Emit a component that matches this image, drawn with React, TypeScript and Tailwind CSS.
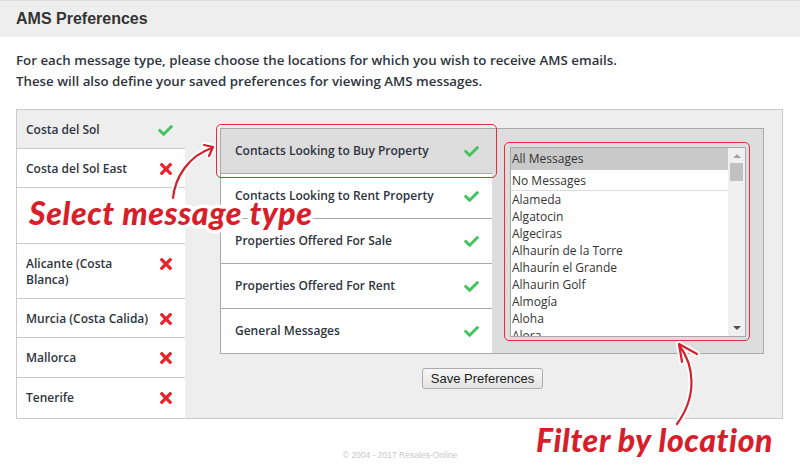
import React from 'react';

// AMS preferences screen with two help annotations on top

type Region = { name: string; on: boolean; h: string; selected?: boolean; last?: boolean };

const regions: Region[] = [
  { name: 'Costa del Sol', on: true, h: 'h-[39px]', selected: true },
  { name: 'Costa del Sol East', on: false, h: 'h-[39px]' },
  { name: '', on: false, h: 'h-[56px]' },
  { name: 'Alicante (Costa Blanca)', on: false, h: 'h-[55px]' },
  { name: 'Murcia (Costa Calida)', on: false, h: 'h-[39px]' },
  { name: 'Mallorca', on: false, h: 'h-[40px]' },
  { name: 'Tenerife', on: false, h: 'h-[40px]', last: true },
];

const messageTypes = [
  'Contacts Looking to Buy Property',
  'Contacts Looking to Rent Property',
  'Properties Offered For Sale',
  'Properties Offered For Rent',
  'General Messages',
];

const locations = [
  'Alameda',
  'Algatocin',
  'Algeciras',
  'Alhaurín de la Torre',
  'Alhaurín el Grande',
  'Alhaurin Golf',
  'Almogía',
  'Aloha',
  'Alora',
  'Arriate',
];

const Check = () => (
  <svg viewBox="0 0 512 512" className="w-[15px] h-[15px] fill-[#3fc45f]">
    <path d="M173.898 439.404l-166.4-166.4c-9.997-9.997-9.997-26.206 0-36.204l36.203-36.204c9.997-9.998 26.207-9.998 36.204 0L192 312.69 432.095 72.596c9.997-9.997 26.207-9.997 36.204 0l36.203 36.204c9.997 9.997 9.997 26.206 0 36.204l-294.4 294.401c-9.998 9.997-26.207 9.997-36.204-.001z" />
  </svg>
);

const Cross = () => (
  <svg viewBox="0 80 352 352" className="w-[12px] h-[12px] fill-[#e8212b]">
    <path d="M242.72 256l100.07-100.07c12.28-12.28 12.28-32.19 0-44.48l-22.24-22.24c-12.28-12.28-32.19-12.28-44.48 0L176 189.28 75.93 89.21c-12.28-12.28-32.19-12.28-44.48 0L9.21 111.45c-12.28 12.28-12.28 32.19 0 44.48L109.28 256 9.21 356.07c-12.28 12.28-12.28 32.19 0 44.48l22.24 22.24c12.28 12.28 32.2 12.28 44.48 0L176 322.72l100.07 100.07c12.28 12.28 32.2 12.28 44.48 0l22.24-22.24c12.28-12.28 12.28-32.19 0-44.48L242.72 256z" />
  </svg>
);

const RegionRow: React.FC<{ region: Region }> = ({ region }) => (
  <div
    className={`flex items-start justify-between pl-[9px] pr-[12px] pt-[12px] ${region.h} ${
      region.selected ? 'bg-[#eeeeee]' : 'bg-white'
    } ${region.last ? '' : 'border-b border-[#cccccc]'}`}
  >
    <span className="w-[130px] text-[12px] leading-[16px] font-semibold">{region.name}</span>
    {region.name && (
      <span className="flex h-[16px] w-[15px] items-center justify-center">
        {region.on ? <Check /> : <Cross />}
      </span>
    )}
  </div>
);

export default function App() {
  return (
    <div className="relative w-[800px] h-[469px] overflow-hidden bg-white text-[#2e3440] font-['Open_Sans',sans-serif]">
      {/* Title bar */}
      <div className="flex h-[37px] items-center border-t border-[#dcdcdc] bg-[#eeeeee] px-4">
        <h1 className="font-['Liberation_Sans',Arial,sans-serif] text-[16px] font-bold text-[#333333]">
          AMS Preferences
        </h1>
      </div>

      {/* Intro */}
      <div className="px-4 pt-[13px] text-[13.3px] leading-[21px] font-semibold">
        <p>For each message type, please choose the locations for which you wish to receive AMS emails.</p>
        <p>These will also define your saved preferences for viewing AMS messages.</p>
      </div>

      {/* Main panel */}
      <div className="mx-4 mt-[17px] flex h-[310px] w-[767px] border border-[#cccccc] bg-[#eeeeee]">
        <div className="w-[168px]">
          {regions.map((r, i) => (
            <RegionRow key={i} region={r} />
          ))}
        </div>

        <div className="flex-1 pt-[18px]">
          <div className="ml-[35px] flex h-[226px] w-[544px] border border-[#aaaaaa] bg-[#dddddd]">
            <div className="w-[271px]">
              {messageTypes.map((m, i) => (
                <div
                  key={m}
                  className={`flex items-center justify-between pl-[14px] pr-[13px] ${
                    i === messageTypes.length - 1 ? 'h-[44px]' : 'h-[45px] border-b border-[#aaaaaa]'
                  } ${i === 0 ? 'bg-[#dddddd]' : 'bg-white'}`}
                >
                  <span className="text-[12px] font-semibold">{m}</span>
                  <Check />
                </div>
              ))}
            </div>

            {/* Location list box */}
            <div className="ml-[18px] mt-[18px] flex h-[190px] w-[236px] overflow-hidden border border-[#aaaaaa] bg-white text-[12px] text-[#333333]">
              <div className="flex-1 overflow-hidden">
                <div className="h-[22px] bg-[#c9c9c9] pl-[1px] leading-[22px]">All Messages</div>
                <div className="h-[21px] border-b border-[#dddddd] pl-[1px] leading-[21px]">No Messages</div>
                {locations.map((l) => (
                  <div key={l} className="h-[17px] pl-[1px] leading-[17px]">
                    {l}
                  </div>
                ))}
              </div>
              <div className="relative w-[17px] bg-[#f0f0f0]">
                <div className="absolute left-[5px] top-[6px] h-0 w-0 border-x-[4px] border-b-[4px] border-x-transparent border-b-[#a3a3a3]" />
                <div className="absolute left-[2px] top-[15px] h-[18px] w-[13px] bg-[#c1c1c1]" />
                <div className="absolute bottom-[6px] left-[5px] h-0 w-0 border-x-[4px] border-t-[4px] border-x-transparent border-t-[#505050]" />
              </div>
            </div>
          </div>

          <div className="mt-[14px] flex justify-center pr-[2px]">
            <button className="h-[21px] w-[121px] rounded-[3px] border border-[#adadad] bg-gradient-to-b from-[#f7f7f7] to-[#e3e3e3] font-['Liberation_Sans',Arial,sans-serif] text-[13px] leading-[19px] text-[#222222]">
              Save Preferences
            </button>
          </div>
        </div>
      </div>

      {/* Footer */}
      <div className="mt-[30px] text-center font-['Liberation_Sans',Arial,sans-serif] text-[8.5px] leading-[12px] text-[#c8c8c8]">
        © 2004 - 2017 Resales-Online
      </div>

      {/* Annotation: highlight boxes */}
      <div className="pointer-events-none absolute left-[216px] top-[124px] h-[54px] w-[281px] rounded-[5px] border border-[#e0303c]" />
      <div className="pointer-events-none absolute left-[504px] top-[142px] h-[199px] w-[246px] rounded-[5px] border border-[#e0303c]" />

      {/* Annotation: arrows */}
      <svg className="pointer-events-none absolute left-0 top-0 h-[469px] w-[800px]" viewBox="0 0 800 469" fill="none">
        <g stroke="#ffffff" strokeWidth="6" strokeLinecap="round" strokeLinejoin="round">
          <path d="M173 198 C175 178 188 156 212 148" />
          <path d="M204 145 L213 147 L209 156" />
          <path d="M677 424 C698 395 694 365 679 345" />
          <path d="M697 354 L679 344 L682 362" />
        </g>
        <g stroke="#d71f2b" strokeWidth="2.2" strokeLinecap="round" strokeLinejoin="round">
          <path d="M173 198 C175 178 188 156 212 148" />
          <path d="M204 145 L213 147 L209 156" />
          <path d="M677 424 C698 395 694 365 679 345" />
          <path d="M697 354 L679 344 L682 362" />
        </g>
      </svg>

      {/* Annotation: labels */}
      <div className="pointer-events-none absolute left-[29px] top-[197px] font-['Lato',sans-serif] text-[32px] leading-[32px] font-black italic tracking-[0.6px] text-[#d71f2b] [-webkit-text-stroke:7px_#ffffff] [paint-order:stroke_fill]">
        Select message type
      </div>
      <div className="pointer-events-none absolute left-[536px] top-[424px] font-['Lato',sans-serif] text-[32px] leading-[32px] font-black italic tracking-[0.6px] text-[#d71f2b]">
        Filter by location
      </div>
    </div>
  );
}
